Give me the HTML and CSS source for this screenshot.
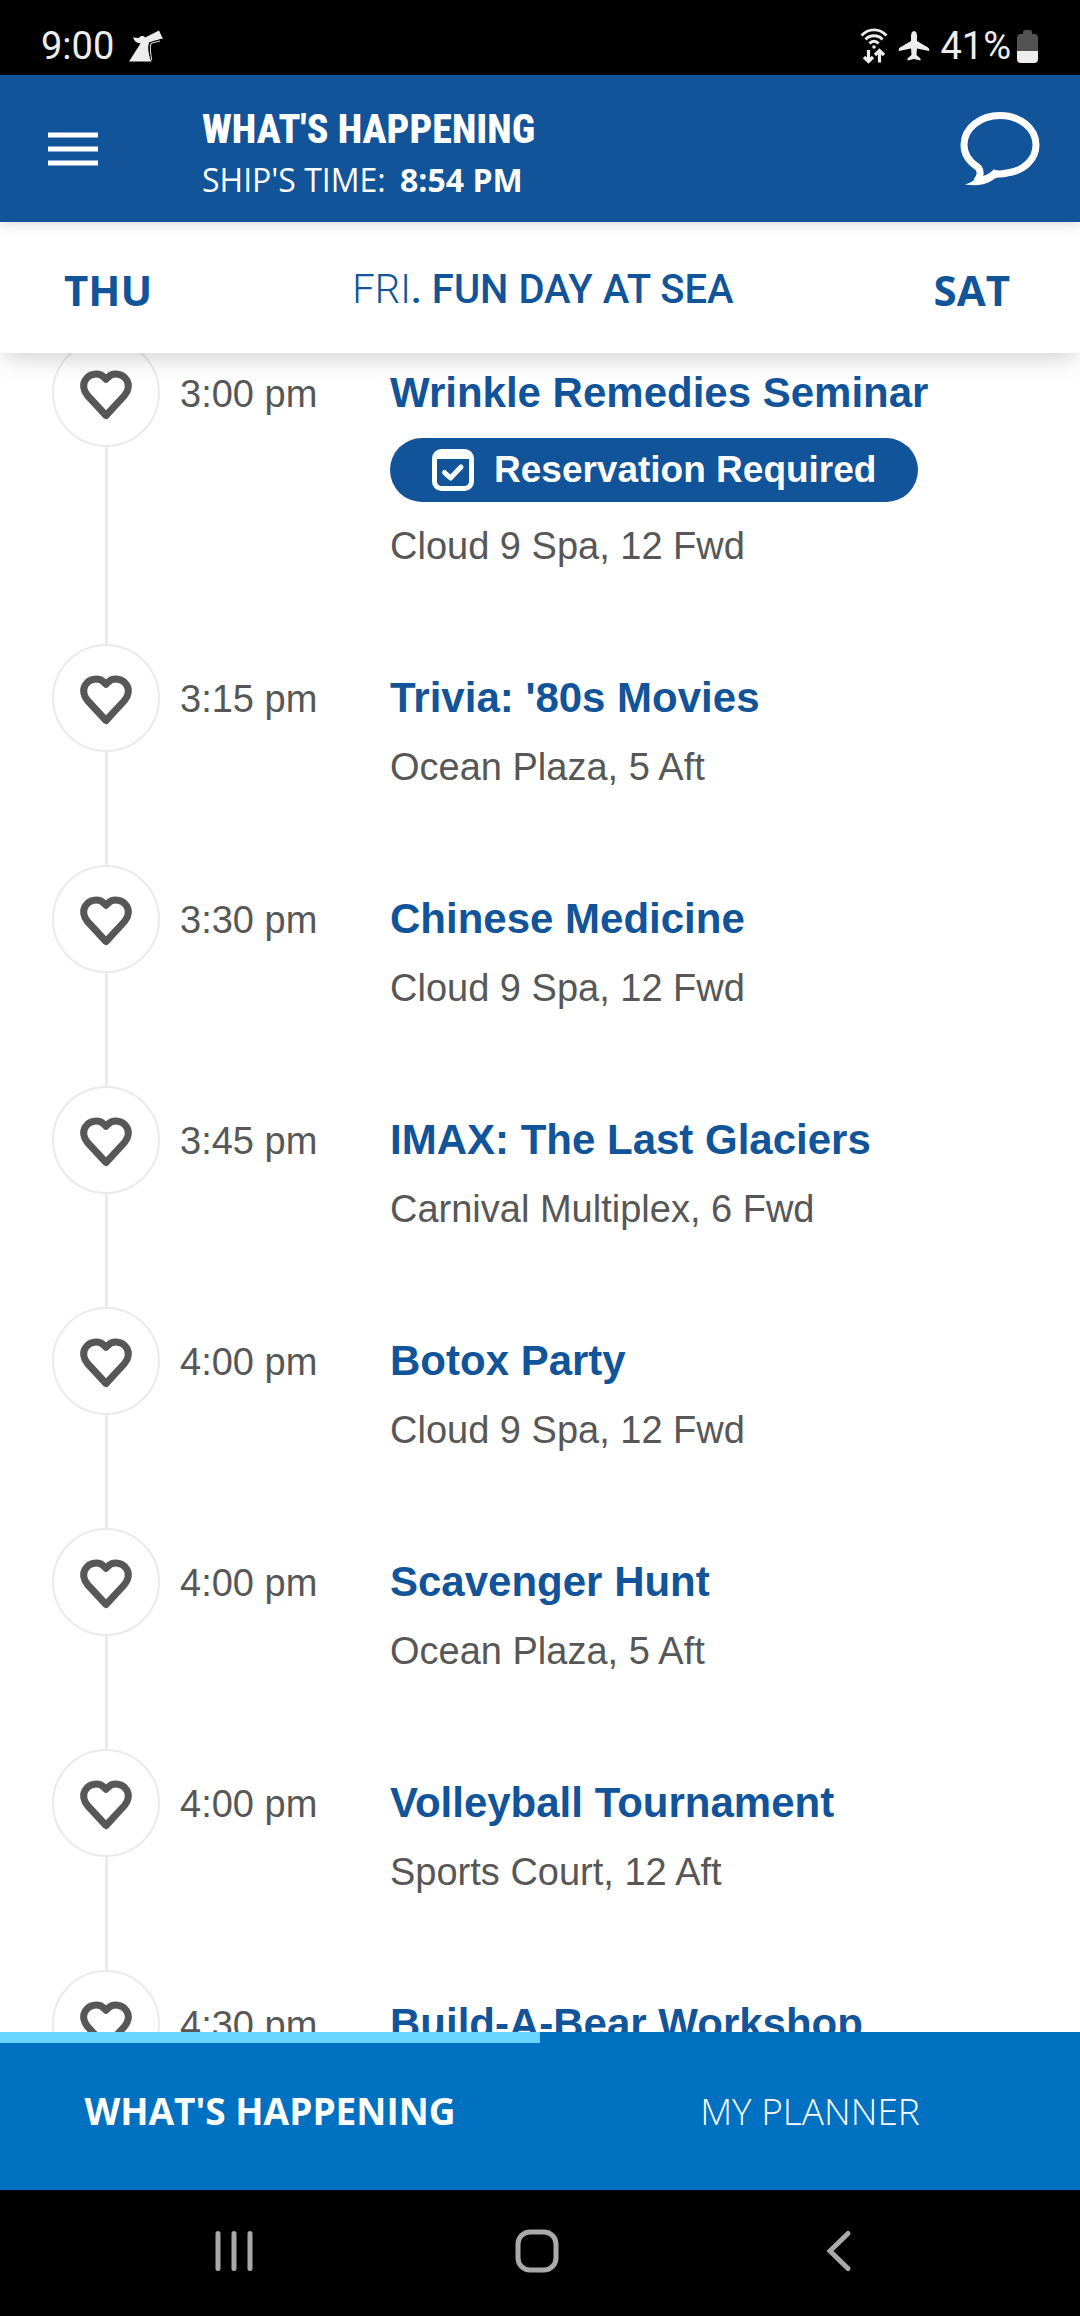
FILE: index.html
```html
<!DOCTYPE html>
<html lang="en">
<head>
  <meta charset="UTF-8" />
  <meta name="viewport" content="width=device-width, initial-scale=1.0" />
  <title>What's Happening</title>
  <link rel="stylesheet" href="styles.css">
</head>
<body>
  <!-- shared icons -->
  <svg class="sprite" aria-hidden="true">
    <symbol id="heart" viewBox="0 0 54 52">
      <path d="M27 46.5 L8.5 26.5 C4.5 22 3.3 15.5 6.5 10.8 C10.5 4.3 20 3.2 25.2 8.5 L27 10.3 L28.8 8.5 C34 3.2 43.5 4.3 47.5 10.8 C50.7 15.5 49.5 22 45.5 26.5 Z" fill="none" stroke="#575757" stroke-width="7" stroke-linejoin="round"/>
    </symbol>
  </svg>

  <div class="status-bar">
    <div class="status-left">
      <span>9:00</span>
      <svg width="36" height="34" viewBox="0 0 36 34" aria-hidden="true">
        <path d="M1 32.5 L12.5 14.5 C8.5 14 6 12 5 8.5 L11 9 C12 6.5 16 6.5 17 8.5 L31 1.5 L35 10 L21.5 13.5 C19.5 19 21.5 26 23.5 32.5 Z" fill="#ededed"/>
        <path d="M34.5 10.5 L22 14 C20 19 22 26 23.5 31" fill="none" stroke="#000" stroke-width="2"/>
        <path d="M32 12 L23 14.3 C21.5 19 22.8 25 23.7 31" fill="none" stroke="#ededed" stroke-width="1"/>
      </svg>
    </div>
    <div class="status-right">
      <svg width="28" height="38" viewBox="0 0 28 38" aria-hidden="true">
        <g fill="none" stroke="#ededed" stroke-width="2.8">
          <path d="M1.5 8.5 C8.5 1 19.5 1 26.5 8.5"/>
          <path d="M5.5 12.5 C10 7.5 18 7.5 22.5 12.5"/>
          <path d="M9.5 16.5 C12 13.5 16 13.5 18.5 16.5"/>
        </g>
        <circle cx="14" cy="20" r="1.8" fill="#ededed"/>
        <path d="M8.5 23 V34 M4 30 L8.5 34.5 L13 30 M19.5 35.5 V24 M15 28 L19.5 23.5 L24 28" fill="none" stroke="#ededed" stroke-width="3.2"/>
      </svg>
      <svg width="32" height="32" viewBox="0 0 32 32" aria-hidden="true">
        <path d="M16 1 C18 1 19 3.5 19 6 V11 L30 17.5 C31.5 18.5 31.5 20 31 21 L19 18.5 L18.5 25 L22.5 28.5 V30.5 L16 29 L9.5 30.5 V28.5 L13.5 25 L13 18.5 L1 21 C.5 20 .5 18.5 2 17.5 L13 11 V6 C13 3.5 14 1 16 1 Z" fill="#ededed"/>
      </svg>
      <span>41%</span>
      <svg width="21" height="33" viewBox="0 0 21 33" aria-hidden="true">
        <path d="M6 4 V2 Q6 0 8 0 H13 Q15 0 15 2 V4 H17 Q21 4 21 8 V21 H0 V8 Q0 4 4 4 Z" fill="#525252"/>
        <path d="M0 21 H21 V29 Q21 33 17 33 H4 Q0 33 0 29 Z" fill="#ededed"/>
      </svg>
    </div>
  </div>

  <header class="app-header">
    <button class="menu-btn" aria-label="Menu">
      <svg width="50" height="34" viewBox="0 0 50 34">
        <path d="M0 3 H50 M0 17 H50 M0 31 H50" stroke="#fff" stroke-width="5"/>
      </svg>
    </button>
    <div class="header-text">
      <h1>WHAT'S HAPPENING</h1>
      <p>SHIP'S TIME: <b>8:54 PM</b></p>
    </div>
    <button class="chat-btn" aria-label="Chat">
      <svg width="80" height="74" viewBox="0 0 80 74">
        <path d="M34.5 61.5 C38 62 44 61.8 47 61 C64 59 76 47 76 33 C76 16.5 60 3.5 40 3.5 C20 3.5 4 16.5 4 33 C4 43 9 49.5 17.5 55 C21 58 21.5 65 16 69.5" fill="none" stroke="#fff" stroke-width="7"/>
        <path d="M5 72.5 C13 70 17 66.5 18.5 61 L23 64 C28 62.5 31.5 60 34 57 L41 65 C37 65 35.5 66 32 68.5 C24 73.5 14 74 5 72.5 Z" fill="#fff"/>
      </svg>
    </button>
  </header>

  <nav class="days">
    <button class="day">THU</button>
    <h2><span>FRI</span>. FUN DAY AT SEA</h2>
    <button class="day">SAT</button>
  </nav>

  <main class="schedule">
    <ul class="events">
      <li class="event">
        <div class="rail"><button class="fav" aria-label="Favorite"><svg><use href="#heart"/></svg></button></div>
        <div class="event-body">
          <time>3:00 pm</time>
          <div class="details">
            <h3>Wrinkle Remedies Seminar</h3>
            <div class="badge">
              <svg width="42" height="42" viewBox="0 0 42 42" aria-hidden="true">
                <rect x="2.5" y="2.5" width="37" height="37" rx="7" fill="none" stroke="#fff" stroke-width="5"/>
                <path d="M3 3 H39 V10 H3 Z" fill="#fff"/>
                <path d="M12.5 23.5 L18.5 29 L29 18" fill="none" stroke="#fff" stroke-width="5" stroke-linecap="round" stroke-linejoin="round"/>
              </svg>
              Reservation Required
            </div>
            <p>Cloud 9 Spa, 12 Fwd</p>
          </div>
        </div>
      </li>
      <li class="event">
        <div class="rail"><button class="fav" aria-label="Favorite"><svg><use href="#heart"/></svg></button></div>
        <div class="event-body">
          <time>3:15 pm</time>
          <div class="details">
            <h3>Trivia: '80s Movies</h3>
            <p>Ocean Plaza, 5 Aft</p>
          </div>
        </div>
      </li>
      <li class="event">
        <div class="rail"><button class="fav" aria-label="Favorite"><svg><use href="#heart"/></svg></button></div>
        <div class="event-body">
          <time>3:30 pm</time>
          <div class="details">
            <h3>Chinese Medicine</h3>
            <p>Cloud 9 Spa, 12 Fwd</p>
          </div>
        </div>
      </li>
      <li class="event">
        <div class="rail"><button class="fav" aria-label="Favorite"><svg><use href="#heart"/></svg></button></div>
        <div class="event-body">
          <time>3:45 pm</time>
          <div class="details">
            <h3>IMAX: The Last Glaciers</h3>
            <p>Carnival Multiplex, 6 Fwd</p>
          </div>
        </div>
      </li>
      <li class="event">
        <div class="rail"><button class="fav" aria-label="Favorite"><svg><use href="#heart"/></svg></button></div>
        <div class="event-body">
          <time>4:00 pm</time>
          <div class="details">
            <h3>Botox Party</h3>
            <p>Cloud 9 Spa, 12 Fwd</p>
          </div>
        </div>
      </li>
      <li class="event">
        <div class="rail"><button class="fav" aria-label="Favorite"><svg><use href="#heart"/></svg></button></div>
        <div class="event-body">
          <time>4:00 pm</time>
          <div class="details">
            <h3>Scavenger Hunt</h3>
            <p>Ocean Plaza, 5 Aft</p>
          </div>
        </div>
      </li>
      <li class="event">
        <div class="rail"><button class="fav" aria-label="Favorite"><svg><use href="#heart"/></svg></button></div>
        <div class="event-body">
          <time>4:00 pm</time>
          <div class="details">
            <h3>Volleyball Tournament</h3>
            <p>Sports Court, 12 Aft</p>
          </div>
        </div>
      </li>
      <li class="event">
        <div class="rail"><button class="fav" aria-label="Favorite"><svg><use href="#heart"/></svg></button></div>
        <div class="event-body">
          <time>4:30 pm</time>
          <div class="details">
            <h3>Build-A-Bear Workshop</h3>
          </div>
        </div>
      </li>
    </ul>
  </main>

  <nav class="tabs">
    <a href="#" class="tab active">WHAT'S HAPPENING</a>
    <a href="#" class="tab">MY PLANNER</a>
  </nav>

  <div class="system-nav">
    <button aria-label="Recent apps">
      <svg width="44" height="44" viewBox="0 0 44 44">
        <path d="M6 4.5 V39.5 M22 4.5 V39.5 M38 4.5 V39.5" stroke="#a9a9a9" stroke-width="5" stroke-linecap="round"/>
      </svg>
    </button>
    <button aria-label="Home">
      <svg width="44" height="44" viewBox="0 0 44 44">
        <rect x="3" y="3" width="38" height="38" rx="12" fill="none" stroke="#a9a9a9" stroke-width="5"/>
      </svg>
    </button>
    <button aria-label="Back">
      <svg width="44" height="44" viewBox="0 0 44 44">
        <path d="M31 4.5 L13 22 L31 39.5" fill="none" stroke="#a9a9a9" stroke-width="5" stroke-linecap="round"/>
      </svg>
    </button>
  </div>
</body>
</html>
```

FILE: styles.css
```css
* {
  box-sizing: border-box;
}
body {
  margin: 0;
  height: 100vh;
  display: flex;
  flex-direction: column;
  overflow: hidden;
  background: #fff;
  font-family: "Liberation Sans", Arial, sans-serif;
}
h1, h2, h3, p, ul {
  margin: 0;
  padding: 0;
}
button {
  background: none;
  border: none;
  padding: 0;
  font: inherit;
  color: inherit;
  cursor: pointer;
}
svg {
  display: block;
}
.sprite {
  display: none;
}

/* phone status bar */
.status-bar {
  display: flex;
  justify-content: space-between;
  align-items: center;
  padding: 17px 42px 0 41px;
  height: 75px;
  flex-shrink: 0;
  background: #000;
  color: #ededed;
  font-family: Roboto, sans-serif;
  font-size: 38px;
}
.status-left {
  display: flex;
  align-items: center;
  gap: 14px;
}
.status-right {
  display: flex;
  align-items: center;
  gap: 10px;
}
.status-right span {
  margin-right: -4px;
}

/* blue header */
.app-header {
  display: flex;
  align-items: center;
  flex-shrink: 0;
  height: 147px;
  padding: 0 40px 0 48px;
  background: #115499;
  color: #fff;
  box-shadow: 0 2px 12px rgba(0, 0, 0, 0.16);
  position: relative;
  z-index: 3;
}
.header-text {
  flex: 1;
  margin-left: 104px;
  padding-top: 8px;
}
.header-text h1 {
  font-family: "Roboto Condensed", Roboto, sans-serif;
  font-size: 40px;
  line-height: 54px;
  font-weight: 800;
}
.header-text p {
  font-family: "Open Sans", sans-serif;
  font-size: 32px;
  line-height: 46px;
}
.header-text b {
  margin-left: 6px;
}

/* day picker */
.days {
  display: flex;
  justify-content: space-between;
  align-items: center;
  flex-shrink: 0;
  height: 131px;
  padding: 3px 70px 0 64px;
  background: #fff;
  color: #115499;
  box-shadow: 0 8px 24px -4px rgba(0, 0, 0, 0.2);
  position: relative;
  z-index: 2;
}
.day {
  font-family: "Open Sans", sans-serif;
  font-size: 42px;
  font-weight: 700;
}
.days h2 {
  font-family: Roboto, sans-serif;
  font-size: 40px;
  font-weight: 500;
}
.days h2 span {
  font-weight: 300;
}

/* event timeline */
.schedule {
  flex: 1;
  min-height: 0;
  overflow: hidden;
}
.events {
  list-style: none;
  margin-top: -14px;
}
.event {
  display: flex;
  padding-left: 52px;
}
.rail {
  display: flex;
  flex-direction: column;
  align-items: center;
}
.rail::after {
  content: "";
  flex: 1;
  width: 3px;
  background: #ebebeb;
}
.fav {
  display: flex;
  align-items: center;
  justify-content: center;
  width: 108px;
  height: 108px;
  border: 2px solid #ebebeb;
  border-radius: 50%;
}
.fav svg {
  width: 54px;
  height: 52px;
  margin-top: 4px;
}
.event-body {
  flex: 1;
  display: flex;
  align-items: baseline;
  padding: 29px 0 76px 20px;
}
.event-body time {
  width: 210px;
  font-size: 38px;
  line-height: 44px;
  color: #575757;
}
.details h3 {
  font-size: 42px;
  line-height: 50px;
  color: #115499;
}
.details p {
  margin-top: 22px;
  font-size: 38px;
  line-height: 44px;
  color: #575757;
}
.badge {
  display: inline-flex;
  align-items: center;
  gap: 20px;
  height: 64px;
  margin-top: 20px;
  padding: 0 42px;
  border-radius: 32px;
  background: #115499;
  color: #fff;
  font-size: 37px;
  font-weight: 700;
}

/* bottom tabs */
.tabs {
  display: flex;
  flex-shrink: 0;
  height: 158px;
  background: #0070c0;
}
.tab {
  flex: 1;
  display: flex;
  align-items: center;
  justify-content: center;
  border-top: 11px solid transparent;
  padding-bottom: 12px;
  color: #fff;
  font-family: "Open Sans", sans-serif;
  font-size: 37px;
  font-weight: 300;
  text-decoration: none;
}
.tab.active {
  border-top-color: #66d5ff;
  font-weight: 700;
}

/* phone navigation */
.system-nav {
  display: flex;
  justify-content: space-between;
  align-items: center;
  flex-shrink: 0;
  height: 126px;
  padding: 0 219px 4px 212px;
  background: #000;
}
```
